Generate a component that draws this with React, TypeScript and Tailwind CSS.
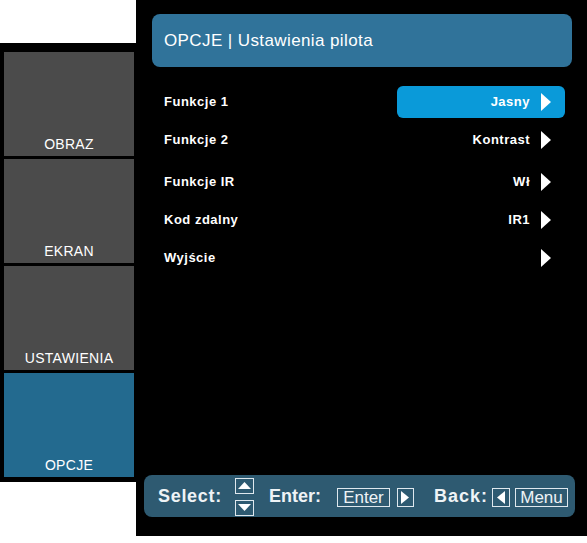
import React from "react";

const Arrow = () => (
  <svg width="10" height="18" viewBox="0 0 10 18" className="shrink-0">
    <polygon points="0,0 10,9 0,18" fill="#ffffff" />
  </svg>
);

type Row = { label: string; value: string; selected?: boolean; mt: string };

const rows: Row[] = [
  { label: "Funkcje 1", value: "Jasny", selected: true, mt: "mt-[19px]" },
  { label: "Funkcje 2", value: "Kontrast", mt: "mt-[6px]" },
  { label: "Funkcje IR", value: "Wł", mt: "mt-[10px]" },
  { label: "Kod zdalny", value: "IR1", mt: "mt-[6px]" },
  { label: "Wyjście", value: "", mt: "mt-[6px]" },
];

const tiles = [
  { label: "OBRAZ", active: false },
  { label: "EKRAN", active: false },
  { label: "USTAWIENIA", active: false },
  { label: "OPCJE", active: true },
];

export default function App() {
  return (
    <div
      className="w-[587px] h-[543px] bg-white flex overflow-hidden"
      style={{ fontFamily: '"Liberation Sans", Arial, sans-serif' }}
    >
      {/* left column */}
      <div className="w-[136px] flex flex-col shrink-0">
        <div className="h-[43px] bg-white" />
        <div className="h-[439px] bg-black pt-[9px] pl-[4px] pr-[2px] flex flex-col gap-[3px]">
          {tiles.map((t) => (
            <div
              key={t.label}
              className={`h-[104px] flex items-end justify-center pb-[1px] text-[14px] tracking-[0.3px] text-white ${
                t.active ? "bg-[#236a8f]" : "bg-[#4b4b4b]"
              }`}
            >
              {t.label}
            </div>
          ))}
        </div>
      </div>

      {/* right column */}
      <div className="w-[451px] h-[536px] bg-black flex flex-col shrink-0">
        <div className="mt-[14px] ml-[16px] w-[420px] h-[53px] rounded-[8px] bg-[#30739a] flex items-center pl-[12px] text-[17px] tracking-[0.4px] text-white">
          OPCJE | Ustawienia pilota
        </div>

        <div className="ml-[16px] w-[420px] flex flex-col">
          {rows.map((r) => (
            <div
              key={r.label}
              className={`${r.mt} h-[32px] flex items-center justify-between pl-[12px] pr-[7px]`}
            >
              <span className="text-[13px] font-bold text-white tracking-[0.5px]">{r.label}</span>
              <div
                className={`w-[168px] h-[32px] rounded-[6px] flex items-center justify-end gap-[11px] pr-[14px] ${
                  r.selected ? "bg-[#0a9ad9]" : ""
                }`}
              >
                <span className="text-[13px] font-bold text-white tracking-[0.5px]">{r.value}</span>
                <Arrow />
              </div>
            </div>
          ))}
        </div>

        <div className="flex-1" />

        {/* footer */}
        <div className="mb-[19px] ml-[8px] w-[431px] h-[42px] rounded-[8px] bg-[#2e5a71] flex items-center pl-[14px] pt-[1px] text-[#eef3f6]">
          <span className="text-[18px] font-bold tracking-[0.7px]">Select:</span>
          <div className="ml-[13px] flex flex-col gap-[6px]">
            <div className="w-[19px] h-[16px] border border-[#dfe8ee] flex items-center justify-center">
              <svg width="13" height="7" viewBox="0 0 13 7">
                <polygon points="0,7 6.5,0 13,7" fill="#ffffff" />
              </svg>
            </div>
            <div className="w-[19px] h-[16px] border border-[#dfe8ee] flex items-center justify-center">
              <svg width="13" height="7" viewBox="0 0 13 7">
                <polygon points="0,0 13,0 6.5,7" fill="#ffffff" />
              </svg>
            </div>
          </div>
          <span className="ml-[15px] text-[18px] font-bold">Enter:</span>
          <div className="ml-[16px] mt-[2px] w-[53px] h-[19px] border border-[#dfe8ee] flex items-center justify-center text-[17px] leading-none">
            Enter
          </div>
          <div className="ml-[7px] mt-[2px] w-[17px] h-[19px] border border-[#dfe8ee] flex items-center justify-center">
            <svg width="8" height="13" viewBox="0 0 8 13">
              <polygon points="0,0 8,6.5 0,13" fill="#ffffff" />
            </svg>
          </div>
          <span className="ml-[20px] text-[18px] font-bold tracking-[1px]">Back:</span>
          <div className="ml-[4px] mt-[2px] w-[18px] h-[19px] border border-[#dfe8ee] flex items-center justify-center">
            <svg width="8" height="13" viewBox="0 0 8 13">
              <polygon points="8,0 0,6.5 8,13" fill="#ffffff" />
            </svg>
          </div>
          <div className="ml-[5px] mt-[2px] w-[53px] h-[19px] border border-[#dfe8ee] flex items-center justify-center text-[17px] leading-none">
            Menu
          </div>
        </div>
      </div>
    </div>
  );
}
